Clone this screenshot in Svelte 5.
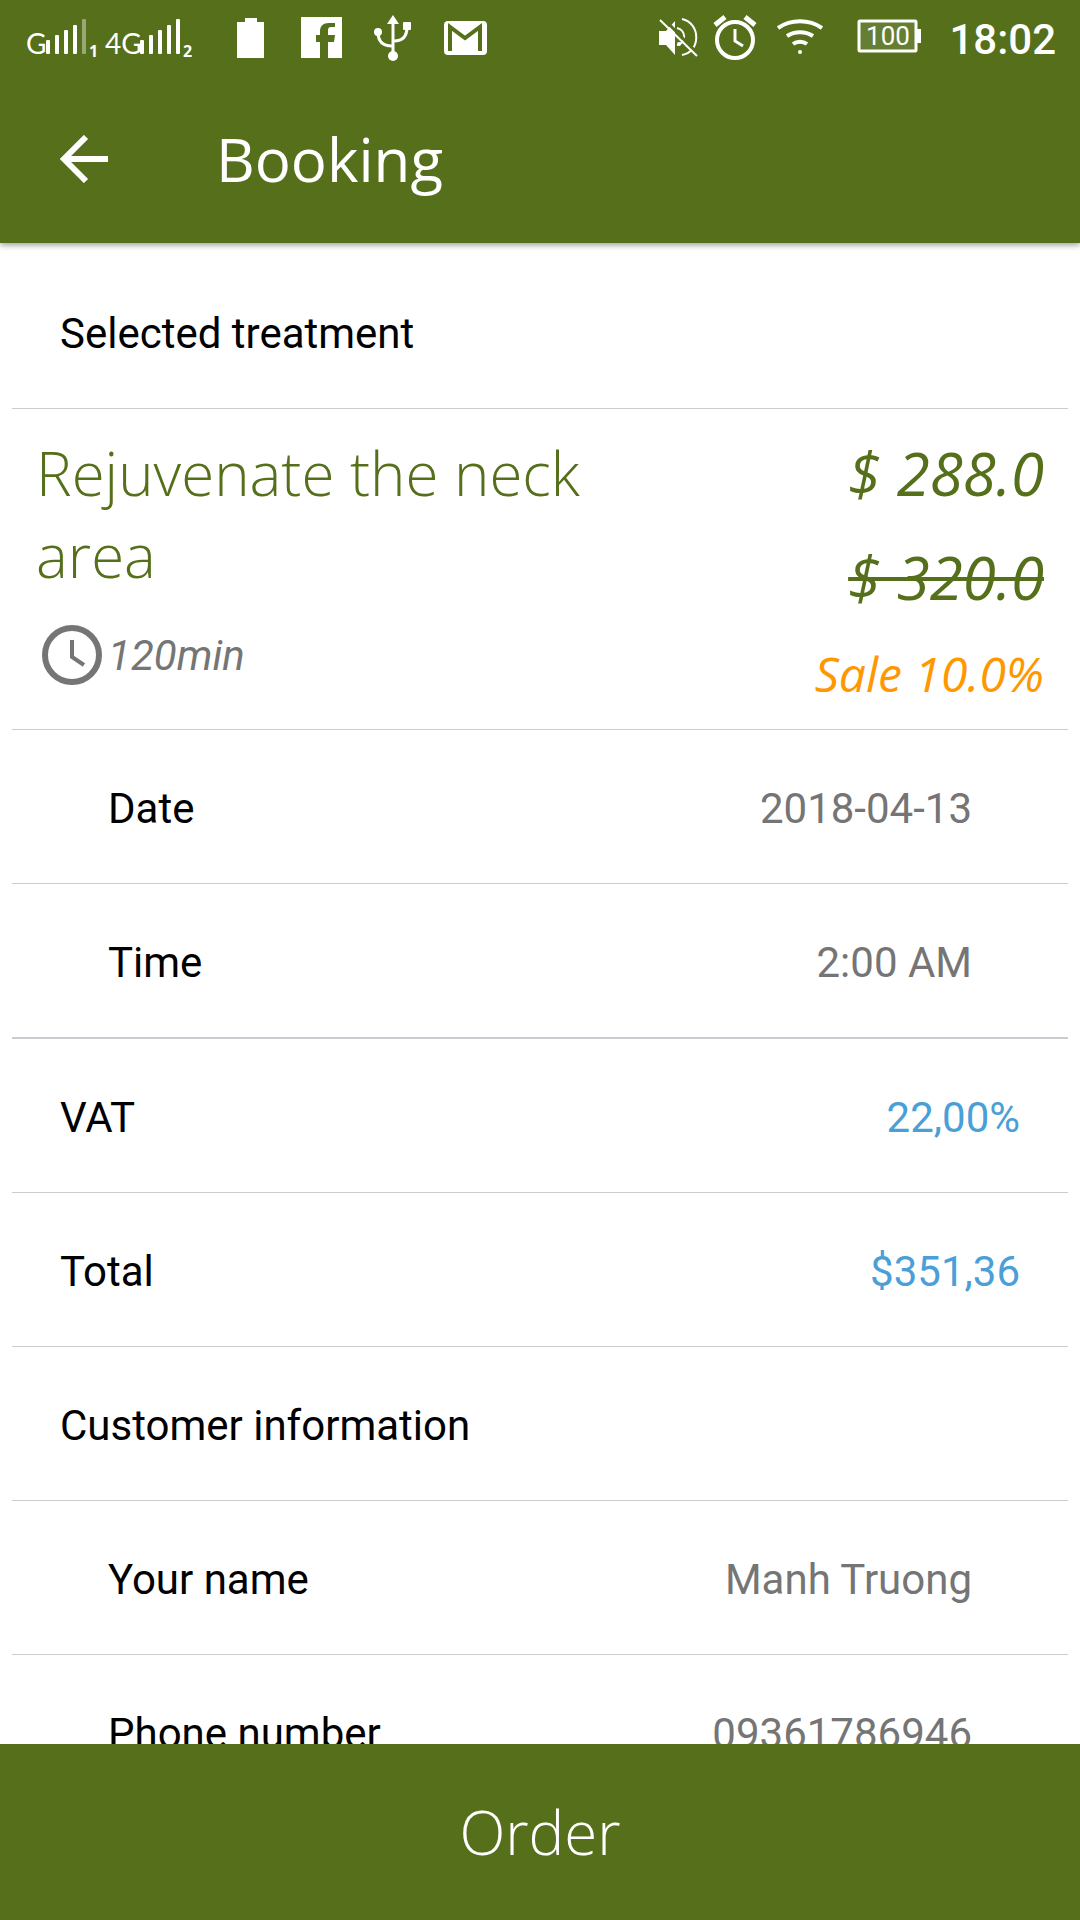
<script>
	let title = 'Booking';

	const treatment = {
		name: 'Rejuvenate the neck area',
		duration: '120min',
		price: '$ 288.0',
		oldPrice: '$ 320.0',
		sale: 'Sale 10.0%'
	};

	const rows = [
		{ label: 'Date', value: '2018-04-13', sub: true },
		{ label: 'Time', value: '2:00 AM', sub: true, last: true },
		{ label: 'VAT', value: '22,00%' },
		{ label: 'Total', value: '$351,36' }
	];

	const customer = [
		{ label: 'Your name', value: 'Manh Truong', sub: true },
		{ label: 'Phone number', value: '09361786946', sub: true }
	];
</script>

{#snippet row(item)}
	<div class="row" class:sub={item.sub} class:last={item.last}>
		<dt>{item.label}</dt>
		<dd>{item.value}</dd>
	</div>
{/snippet}

<div class="screen">
	<header>
		<div class="status">
			<div class="status-left">
				<svg width="172" height="48" viewBox="0 0 172 48" fill="#fff">
					<text class="net" x="2" y="40">G</text>
					<rect x="22" y="26" width="4" height="14" rx="1" />
					<rect x="31" y="21" width="4" height="19" rx="1" />
					<rect x="40" y="16" width="4" height="24" rx="1" />
					<rect x="49" y="11" width="4" height="29" rx="1" />
					<rect x="58" y="5" width="4" height="35" rx="1" opacity="0.4" />
					<text class="sim" x="65" y="43">1</text>
					<text class="net" x="81" y="40">4G</text>
					<rect x="116" y="26" width="4" height="14" rx="1" />
					<rect x="125" y="21" width="4" height="19" rx="1" />
					<rect x="134" y="16" width="4" height="24" rx="1" />
					<rect x="143" y="11" width="4" height="29" rx="1" />
					<rect x="152" y="5" width="4" height="35" rx="1" />
					<text class="sim" x="159" y="43">2</text>
				</svg>
				<svg class="full" width="28" height="48" viewBox="0 0 28 48" fill="#fff">
					<path d="M8 4h12v4h7v36H0V8h8z" />
				</svg>
				<svg width="42" height="48" viewBox="0 0 42 48">
					<path fill="#fff" d="M0 3h41v41H27V28h6l1-7h-7v-5c0-2 1-3 3-3h4V9h-6c-6 0-9 3-9 8v4h-4v7h4v16H0z" />
				</svg>
				<svg width="38" height="48" viewBox="0 0 38 48" fill="none" stroke="#fff" stroke-width="3">
					<path d="M19 8v33M4 18c0 10 5 14 14 14M33 13c0 10-5 14-13 14" />
					<g fill="#fff" stroke="none">
						<path d="M19 1l6 9H13z" />
						<circle cx="4" cy="18" r="4" />
						<rect x="29" y="8" width="8" height="8" rx="1" />
						<circle cx="19" cy="42" r="5" />
					</g>
				</svg>
				<svg width="44" height="48" viewBox="0 0 44 48">
					<rect x="1" y="7" width="43" height="34" rx="4" fill="#fff" />
					<path d="M7 37V13l15 11 15-11v24" fill="none" stroke="#556f1a" stroke-width="4" />
				</svg>
			</div>
			<div class="status-right">
				<svg width="42" height="48" viewBox="0 0 42 48" fill="none" stroke="#fff" stroke-width="2">
					<path fill="#fff" stroke="none" d="M2 17h7l9-10v34L9 31H2z" />
					<path d="M20 14c9 2 10 15 0 17" />
					<path d="M25 5c19 4 19 33 0 36" />
					<circle cx="22" cy="30" r="1" />
					<path stroke="#556f1a" stroke-width="3" d="M6 4l36 37" />
					<path d="M3 6l37 36" />
				</svg>
				<svg width="44" height="48" viewBox="0 0 44 48" fill="none" stroke="#fff">
					<circle cx="22" cy="26" r="18" stroke-width="4" />
					<path stroke-width="3" d="M22 15v12l8 5" />
					<path stroke-width="5" d="M2 11l10-8M42 11L32 3" />
				</svg>
				<svg class="wifi" width="46" height="48" viewBox="0 0 46 48" fill="none" stroke="#fff" stroke-width="4">
					<path d="M1 14c13-9 31-9 44 0" />
					<path d="M10 22c8-5 18-5 26 0" />
					<path d="M16 30c4-3 10-3 14 0" />
					<circle cx="23" cy="38" r="2" fill="#fff" stroke="none" />
				</svg>
				<svg class="battery" width="64" height="48" viewBox="0 0 64 48">
					<rect x="2" y="7" width="57" height="30" rx="1" fill="#667e31" stroke="#fff" stroke-width="3" />
					<path d="M60 15h4v14h-4z" fill="#fff" />
					<text class="charge" x="31" y="31" text-anchor="middle">100</text>
				</svg>
				<time>18:02</time>
			</div>
		</div>
		<div class="app-bar">
			<button class="back" aria-label="Back">
				<svg width="48" height="48" viewBox="0 0 48 48" fill="none" stroke="#fff" stroke-width="6">
					<path d="M26 2L4 24l22 22M4 24h44" />
				</svg>
			</button>
			<h1>{title}</h1>
		</div>
	</header>

	<main>
		<h2 class="first">Selected treatment</h2>
		<section class="treatment">
			<div class="info">
				<h3>{treatment.name}</h3>
				<p class="duration">
					<svg width="60" height="60" viewBox="0 0 60 60" fill="none" stroke="#757575">
						<circle cx="30" cy="30" r="27" stroke-width="6" />
						<path d="M30 15v17l12 8" stroke-width="4" />
					</svg>
					{treatment.duration}
				</p>
			</div>
			<div class="prices">
				<span>{treatment.price}</span>
				<s>{treatment.oldPrice}</s>
				<span class="sale">{treatment.sale}</span>
			</div>
		</section>
		<dl>
			{#each rows as item}
				{@render row(item)}
			{/each}
		</dl>
		<h2>Customer information</h2>
		<dl>
			{#each customer as item}
				{@render row(item)}
			{/each}
		</dl>
	</main>

	<button class="order">Order</button>
</div>

<style>
	:global(body) { margin: 0; background: #fff; }
	.screen { display: flex; flex-direction: column; height: 100vh; font-family: Roboto, sans-serif; font-size: 42px; color: #000; }
	svg { display: block; flex: none; }

	header { flex: none; position: relative; background: #556f1a; color: #fff; box-shadow: 0 2px 6px rgba(0, 0, 0, 0.4); }
	.status { display: flex; justify-content: space-between; align-items: center; height: 76px; padding: 0 24px; }
	.status-left { display: flex; align-items: center; gap: 31px; }
	.status-right { display: flex; align-items: center; gap: 14px; }
	.full { margin: 0 5px 0 10px; }
	.wifi { margin-left: 6px; }
	.battery { margin: 0 14px 0 20px; }
	.net { font: 400 28px Lato, sans-serif; }
	.sim { font: 700 16px 'Open Sans', sans-serif; }
	.charge { font: 400 26px Roboto, sans-serif; fill: #fff; }
	time { padding-top: 2px; font-weight: 500; }

	.app-bar { display: flex; align-items: center; height: 165px; padding: 0 60px 2px; gap: 108px; }
	.back { padding: 0; border: 0; background: none; cursor: pointer; }
	h1 { margin: 0; font: 400 60px/82px 'Open Sans', sans-serif; }

	main { flex: 1; min-height: 0; overflow-y: auto; scrollbar-width: none; padding: 0 12px; }
	h2, .row { display: flex; align-items: center; height: 149px; padding: 4px 48px 0; border-bottom: 1px solid #cccbd2; }
	h2 { margin: 0; font-size: 42px; font-weight: 400; }
	.first { padding-top: 16px; }
	dl, dd { margin: 0; }
	.row { justify-content: space-between; }
	.row dd { color: #4a9fd8; }
	.row.sub { padding: 4px 96px 0; }
	.row.sub dd { color: #757575; }
	.row.last { border-bottom-width: 2px; }

	.treatment { display: flex; justify-content: space-between; gap: 24px; padding: 23px 24px 21px; border-bottom: 1px solid #cccbd2; }
	.info { flex: 1; max-width: 600px; }
	h3 { margin: 0; color: #556f1a; font: 300 60px/82px 'Open Sans', sans-serif; }
	.duration { display: flex; align-items: center; gap: 6px; margin: 29px 0 0 6px; color: #757575; font-style: italic; }
	.prices { display: flex; flex-direction: column; align-items: flex-end; gap: 22px; color: #556f1a; font: italic 400 60px/82px 'Open Sans', sans-serif; }
	s { text-decoration-thickness: 4px; }
	.sale { color: #ff9800; font-size: 48px; line-height: 68px; }

	.order { flex: none; height: 176px; padding: 0; border: 0; background: #556f1a; color: #fff; font: 300 60px 'Open Sans', sans-serif; cursor: pointer; }
</style>
